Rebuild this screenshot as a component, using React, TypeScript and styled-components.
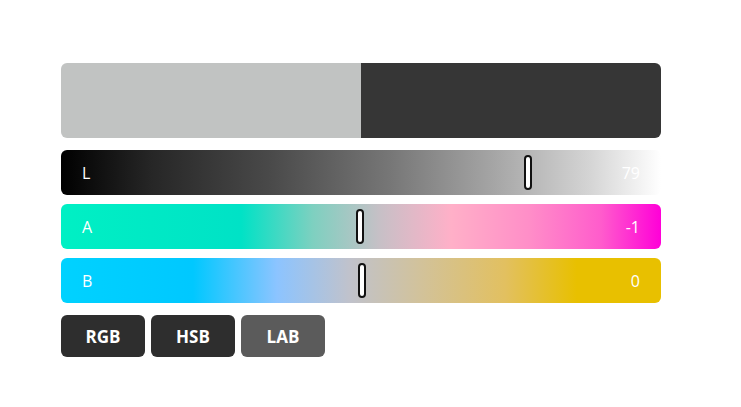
import styled, { createGlobalStyle } from "styled-components";

const GlobalStyle = createGlobalStyle`
  body {
    margin: 0;
    background: #ffffff;
    font-family: "Open Sans", "Noto Sans", sans-serif;
  }
`;

interface Channel {
  label: string;
  value: number;
  thumb: number;
  gradient: string;
}

const channels: Channel[] = [
  {
    label: "L",
    value: 79,
    thumb: 77.8,
    gradient:
      "linear-gradient(to right, #000000 0%, #262626 15%, #4a4a4a 35%, #777777 55%, #a5a5a5 72%, #d4d4d4 88%, #ffffff 100%)",
  },
  {
    label: "A",
    value: -1,
    thumb: 49.8,
    gradient:
      "linear-gradient(to right, #00f0c4 0%, #00e2c6 30%, #7ed0c0 42%, #c6c0c6 53%, #ffb0c8 65%, #ff8ec8 78%, #ff5ccc 90%, #ff00d8 100%)",
  },
  {
    label: "B",
    value: 0,
    thumb: 50.2,
    gradient:
      "linear-gradient(to right, #00d2ff 0%, #00c8ff 22%, #8cc4ff 36%, #c0c2cc 48%, #d2c29a 60%, #e2c060 74%, #e8c000 86%, #e8c000 100%)",
  },
];

const modes = [
  { name: "RGB", active: false },
  { name: "HSB", active: false },
  { name: "LAB", active: true },
];

export default function App() {
  return (
    <>
      <GlobalStyle />
      <Page>
        <Picker>
          <Preview>
            <Swatch color="#c1c3c2" />
            <Swatch color="#363636" />
          </Preview>
          {channels.map((c) => (
            <Slider key={c.label} gradient={c.gradient}>
              <Label>{c.label}</Label>
              <Value>{c.value}</Value>
              <Thumb style={{ left: `${c.thumb}%` }} />
            </Slider>
          ))}
          <Modes>
            {modes.map((m) => (
              <ModeButton key={m.name} active={m.active}>
                {m.name}
              </ModeButton>
            ))}
          </Modes>
        </Picker>
      </Page>
    </>
  );
}

const Page = styled.div`
  width: 741px;
  height: 407px;
  padding: 63px 0 0 61px;
  box-sizing: border-box;
`;

const Picker = styled.div`
  width: 600px;
  display: flex;
  flex-direction: column;
  gap: 9px;
`;

const Preview = styled.div`
  height: 75px;
  display: flex;
  border-radius: 6px;
  overflow: hidden;
  margin-bottom: 3px;
`;

const Swatch = styled.div<{ color: string }>`
  flex: 1;
  background: ${({ color }) => color};
`;

const Slider = styled.div<{ gradient: string }>`
  position: relative;
  height: 45px;
  border-radius: 6px;
  background: ${({ gradient }) => gradient};
  display: flex;
  align-items: center;
  justify-content: space-between;
  padding: 0 21px;
  color: #ffffff;
  font-size: 16px;
`;

const Label = styled.span``;

const Value = styled.span``;

const Thumb = styled.div`
  position: absolute;
  top: 5px;
  width: 8px;
  height: 35px;
  box-sizing: border-box;
  margin-left: -4px;
  background: #ffffff;
  border: 2px solid #111111;
  border-radius: 5px;
`;

const Modes = styled.div`
  display: flex;
  gap: 6px;
  margin-top: 3px;
`;

const ModeButton = styled.div<{ active: boolean }>`
  width: 84px;
  height: 42px;
  border-radius: 6px;
  background: ${({ active }) => (active ? "#5b5b5b" : "#2e2e2e")};
  color: #ffffff;
  font-weight: 700;
  font-size: 17px;
  display: flex;
  align-items: center;
  justify-content: center;
`;
